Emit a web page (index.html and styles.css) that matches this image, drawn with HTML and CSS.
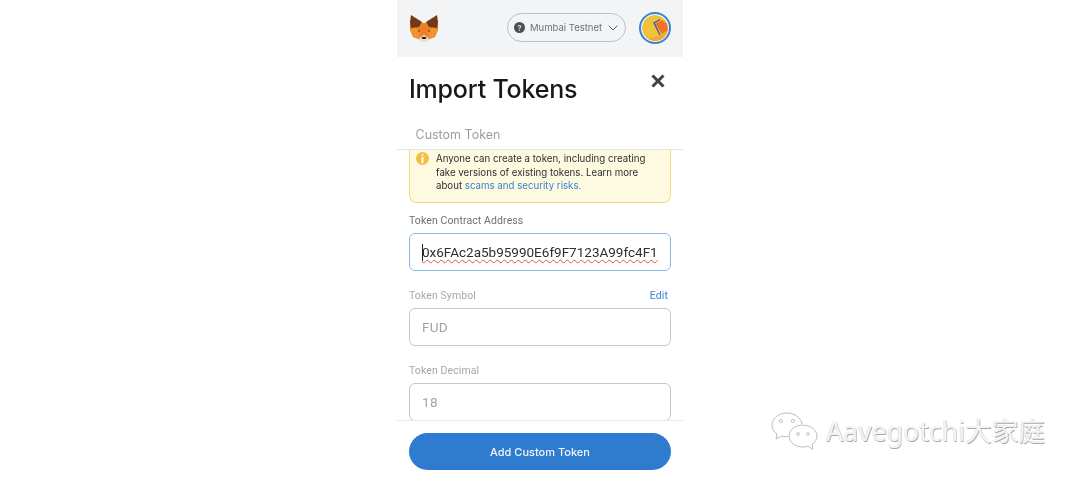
FILE: index.html
```html
<!DOCTYPE html>
<html lang="en">
<head>
<meta charset="utf-8">
<title>Import Tokens</title>
<link rel="stylesheet" href="styles.css">
</head>
<body>
<main class="phone">
  <header class="topbar">
    <svg class="fox" width="30" height="28" viewBox="0 0 30 28" aria-hidden="true">
      <path fill="#ee7f22" d="M1 7 15 9 29 7 29 16 26 23 18 26H12L4 23 1 16Z"/>
      <path fill="#6f3a17" d="M2 1 13 8 10 13 2 14 1 8Z"/>
      <path fill="#6f3a17" d="M28 1 17 8 20 13 28 14 29 8Z"/>
      <path fill="#f39233" d="M1 15 7 14 11 18 10 24 5 23Z"/>
      <path fill="#f39233" d="M29 15 23 14 19 18 20 24 25 23Z"/>
      <path fill="#8a4a1e" d="M8 17 11 16 11 18ZM22 17 19 16 19 18Z"/>
      <path fill="#e8dcd2" d="M10 24 15 21 20 24 18 28H12Z"/>
      <path fill="#1c1a1a" d="M12.500 23H17.500L16.500 25H13.500Z"/>
    </svg>
    <div class="network">
      <span class="net-dot">?</span>
      <span class="net-name">Mumbai Testnet</span>
      <svg class="chevron" width="10" height="6" viewBox="0 0 10 6" aria-hidden="true"><path d="M.7.7 5 5 9.300.7" fill="none" stroke="#5a6068" stroke-width="1"/></svg>
    </div>
    <div class="avatar-ring">
      <svg class="avatar" width="26" height="26" viewBox="0 0 26 26" aria-hidden="true">
        <circle cx="13" cy="13" r="13" fill="#efc23a"/>
        <path fill="#f3a632" d="M6 24 22 19 26 14 26 20 18 26H10Z"/>
        <path fill="#f07427" d="M13 9 20 5 25 9 26 15 20 19Z"/>
        <path fill="none" stroke="#2f4fb5" stroke-width="1.200" d="M18 4.500 12 8 18 20"/>
      </svg>
    </div>
  </header>

  <div class="title-row">
    <h1 class="title">Import Tokens</h1>
    <svg class="close" width="14" height="14" viewBox="0 0 14 14" aria-hidden="true"><path d="M1.500 1.500 12.500 12.500M12.500 1.500 1.500 12.500" stroke="#3f4348" stroke-width="3"/></svg>
  </div>

  <div class="tabs"><span class="tab">Custom Token</span></div>

  <section class="content">
    <div class="warning">
      <span class="warn-icon">i</span>
      <p class="warn-text">Anyone can create a token, including creating fake versions of existing tokens. Learn more about <span class="link">scams and security risks.</span></p>
    </div>

    <div class="field">
      <div class="label-row"><label class="label label-dark">Token Contract Address</label></div>
      <div class="input input-active"><span class="caret"></span><span class="typed"><span class="typed-text">0x6FAc2a5b95990E6f9F7123A99fc4F1e3F4bD5c01</span></span></div>
    </div>

    <div class="field">
      <div class="label-row"><label class="label">Token Symbol</label><span class="edit">Edit</span></div>
      <div class="input">FUD</div>
    </div>

    <div class="field">
      <div class="label-row"><label class="label">Token Decimal</label></div>
      <div class="input">18</div>
    </div>
  </section>

  <footer class="footer">
    <button class="primary" type="button">Add Custom Token</button>
  </footer>
</main>

<div class="watermark">
  <svg class="wechat" width="50" height="38" viewBox="0 0 50 38" aria-hidden="true">
    <path d="M17 1C8 1 2 7 2 13c0 4 2 7 5 9l-1 5 6-3c2 .6 4 .8 6 .7" fill="#fff" stroke="#bdbdbd" stroke-width="1"/>
    <path d="M17 1c8 0 14 5 15 11" fill="none" stroke="#bdbdbd" stroke-width="1"/>
    <circle cx="11" cy="9" r="1.600" fill="#fff" stroke="#aaa" stroke-width=".7"/>
    <circle cx="23" cy="9" r="1.600" fill="#fff" stroke="#aaa" stroke-width=".7"/>
    <path d="M33 13c-8 0-14 5-14 11s6 11 14 11c2 0 3-.2 5-.8l5 3-1-5c3-2 5-5 5-8 0-6-6-11-14-11Z" fill="#fff" stroke="#bdbdbd" stroke-width="1"/>
    <circle cx="28" cy="22" r="1.400" fill="#fff" stroke="#aaa" stroke-width=".7"/>
    <circle cx="38" cy="22" r="1.400" fill="#fff" stroke="#aaa" stroke-width=".7"/>
  </svg>
  <span class="wm-text">Aavegotchi大家庭</span>
</div>
</body>
</html>
```

FILE: styles.css
```css
* { box-sizing: border-box; }

html, body { height: 100%; }

body {
  margin: 0;
  background: #fff;
  display: flex;
  justify-content: center;
  overflow: hidden;
  font-family: "Inter", "Noto Sans", sans-serif;
}

.phone {
  width: 286px;
  height: 483px;
  display: flex;
  flex-direction: column;
  background: #fff;
  filter: blur(0.35px);
}

.topbar {
  flex: none;
  height: 57px;
  background: #f2f4f6;
  display: flex;
  align-items: center;
  padding: 0 12px 2px 12px;
}

.fox { flex: none; margin-right: 68px; }

.network {
  flex: none;
  width: 119px;
  height: 29px;
  border: 1px solid #bbc0c5;
  border-radius: 15px;
  display: flex;
  align-items: center;
  padding-left: 6px;
  margin-right: 13px;
  color: #6a737d;
  font-size: 9.500px;
  white-space: nowrap;
}

.net-dot {
  width: 11px;
  height: 11px;
  border-radius: 50%;
  background: #4a5058;
  color: #d0d3d6;
  font-size: 8px;
  font-weight: 700;
  display: flex;
  align-items: center;
  justify-content: center;
  margin-right: 5px;
  flex: none;
}

.net-name { flex: none; }
.chevron { flex: none; margin-left: 6px; }

.avatar-ring {
  flex: none;
  width: 32px;
  height: 32px;
  border: 2px solid #3a81d3;
  border-radius: 50%;
  padding: 1px;
  background: #f2f4f6;
}

.avatar { display: block; border-radius: 50%; }

.title-row {
  flex: none;
  height: 63px;
  display: flex;
  justify-content: space-between;
  padding: 0 18px 0 12px;
}

.title {
  margin: 15px 0 0;
  font-size: 25px;
  line-height: 35px;
  font-weight: 500;
  letter-spacing: -.2px;
  color: #16181a;
}

.close { margin-top: 17px; }

.tabs {
  flex: none;
  height: 30px;
  border-bottom: 1px solid #e2e4e6;
  padding: 7px 0 0 18.500px;
}

.tab {
  font-size: 12.500px;
  line-height: 16px;
  color: #9a9ea3;
  display: block;
}

.content {
  flex: none;
  height: 270px;
  overflow: hidden;
  padding: 0 12px;
}

.warning {
  height: 53px;
  background: #fefae0;
  border: 1px solid #f6d77a;
  border-top: 0;
  border-radius: 0 0 8px 8px;
  display: flex;
  padding: 2px 6px 0 6px;
}

.warn-icon {
  flex: none;
  width: 13px;
  height: 13px;
  border-radius: 50%;
  background: #f4bf3f;
  color: #fff;
  font-size: 10px;
  font-weight: 900;
  display: flex;
  align-items: center;
  justify-content: center;
  margin: 0 7px 0 0;
}

.warn-text {
  margin: 0;
  font-size: 9.700px;
  line-height: 13.500px;
  color: #2b2f33;
}

.link { color: #3a81d3; }

.field { margin-top: 11px; }
.field + .field { margin-top: 18px; }

.label-row {
  height: 19px;
  display: flex;
  justify-content: space-between;
  padding-right: 3px;
  font-family: "Roboto", sans-serif;
  font-size: 10.500px;
  line-height: 14px;
  letter-spacing: .1px;
}

.label { color: #a4a8ac; }
.label-dark { color: #6b6f74; }
.edit { color: #3a81d3; }

.input {
  height: 38px;
  border: 1px solid #c6c9cc;
  border-radius: 6px;
  padding: 0 12px;
  display: flex;
  align-items: center;
  font-family: "Roboto", sans-serif;
  font-size: 13.500px;
  letter-spacing: .3px;
  color: #a0a4a8;
  white-space: nowrap;
  overflow: hidden;
}

.input-active {
  border-color: #8cbbe8;
  border-width: 1.500px;
  color: #2b2f33;
  position: relative;
  letter-spacing: 0;
  font-size: 13.500px;
  padding-right: 12px;
}

.caret {
  position: absolute;
  left: 12px;
  top: 10px;
  width: 1px;
  height: 17px;
  background: #222;
}

.typed {
  display: block;
  flex: 1;
  min-width: 0;
  padding-bottom: 4px;
  margin-top: 4px;
  overflow: hidden;
}

.typed-text {
  text-decoration: underline wavy #d9534f 1px;
  text-underline-offset: 2px;
}

.footer {
  flex: none;
  height: 63px;
  border-top: 1px solid #e6e8ea;
  padding: 12px 12px 0;
}

.primary {
  display: block;
  width: 100%;
  height: 37px;
  border: 0;
  border-radius: 19px;
  background: #2f7bd0;
  color: #f2f7fc;
  font-family: "Inter", "Noto Sans", sans-serif;
  font-size: 11px;
  font-weight: 500;
}

.watermark {
  position: absolute;
  left: 770px;
  top: 412px;
  display: flex;
  align-items: center;
  gap: 6px;
}

.wm-text {
  font-family: "Noto Sans", "Noto Sans CJK SC", sans-serif;
  font-size: 26.700px;
  line-height: 36px;
  color: #f4f4f4;
  text-shadow: 0.700px 0.700px 0 #a8a8a8, -0.400px -0.400px 0 #e0e0e0;
  white-space: nowrap;
}
```
